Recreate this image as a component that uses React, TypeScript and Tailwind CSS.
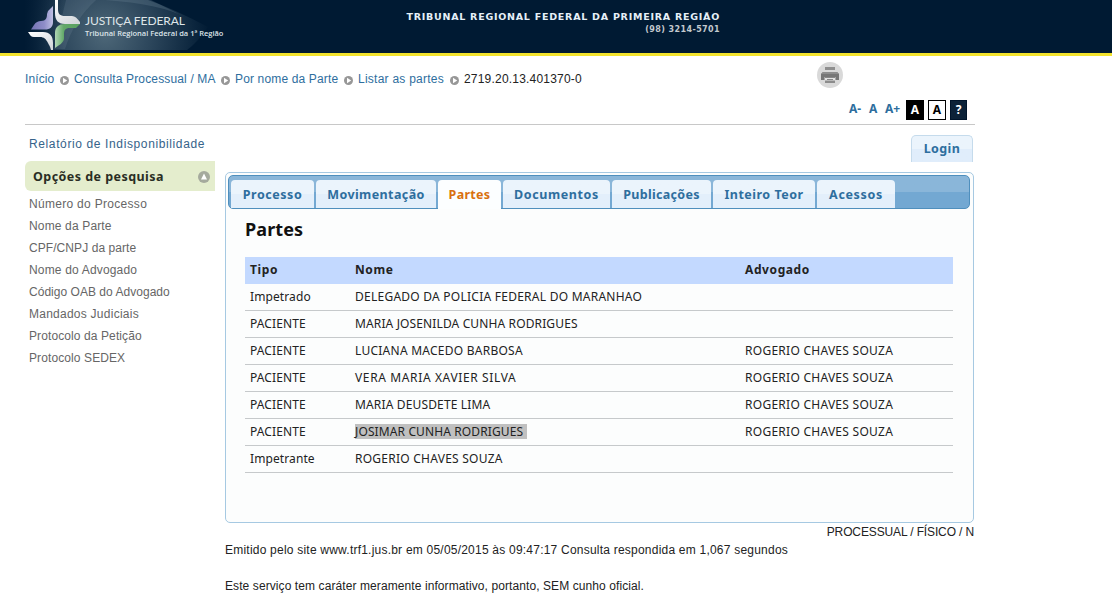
import { clsx } from 'clsx';

const crumbs = [
  { label: 'Início', width: 'w-[35px]', tracking: 'tracking-[0.1px]' },
  { label: 'Consulta Processual / MA', width: 'w-[147px]', tracking: 'tracking-[0.15px]' },
  { label: 'Por nome da Parte', width: 'w-[109px]', tracking: 'tracking-[0.15px]' },
  { label: 'Listar as partes', width: 'w-[92px]', tracking: 'tracking-[0.25px]' },
];

const searchOptions = [
  { label: 'Número do Processo', tracking: 'tracking-[0.3px]' },
  { label: 'Nome da Parte', tracking: 'tracking-[0.15px]' },
  { label: 'CPF/CNPJ da parte', tracking: 'tracking-[0.07px]' },
  { label: 'Nome do Advogado', tracking: 'tracking-[0.17px]' },
  { label: 'Código OAB do Advogado', tracking: 'tracking-[0.03px]' },
  { label: 'Mandados Judiciais', tracking: 'tracking-[0.25px]' },
  { label: 'Protocolo da Petição', tracking: 'tracking-[0.1px]' },
  { label: 'Protocolo SEDEX', tracking: 'tracking-[0.1px]' },
];

const tabs = [
  { label: 'Processo', width: 'w-[83px]', tracking: 'tracking-[0.55px]' },
  { label: 'Movimentação', width: 'w-[120px]', tracking: 'tracking-[0.4px]' },
  { label: 'Partes', width: 'w-[63px]', tracking: 'tracking-[0.3px]', active: true },
  { label: 'Documentos', width: 'w-[107px]', tracking: 'tracking-[0.6px]' },
  { label: 'Publicações', width: 'w-[99px]', tracking: 'tracking-[0.3px]' },
  { label: 'Inteiro Teor', width: 'w-[102px]', tracking: 'tracking-[0.5px]' },
  { label: 'Acessos', width: 'w-[78px]', tracking: 'tracking-[0.65px]' },
];

const rows = [
  { tipo: 'Impetrado', nome: 'DELEGADO DA POLICIA FEDERAL DO MARANHAO', advogado: '', tracking: 'tracking-[0.25px]' },
  { tipo: 'PACIENTE', nome: 'MARIA JOSENILDA CUNHA RODRIGUES', advogado: '', tracking: 'tracking-[0.13px]' },
  { tipo: 'PACIENTE', nome: 'LUCIANA MACEDO BARBOSA', advogado: 'ROGERIO CHAVES SOUZA', tracking: 'tracking-[0.25px]' },
  { tipo: 'PACIENTE', nome: 'VERA MARIA XAVIER SILVA', advogado: 'ROGERIO CHAVES SOUZA', tracking: 'tracking-[0.63px]' },
  { tipo: 'PACIENTE', nome: 'MARIA DEUSDETE LIMA', advogado: 'ROGERIO CHAVES SOUZA', tracking: 'tracking-[0.15px]' },
  {
    tipo: 'PACIENTE',
    nome: 'JOSIMAR CUNHA RODRIGUES',
    advogado: 'ROGERIO CHAVES SOUZA',
    tracking: 'tracking-[0.12px]',
    selected: true,
  },
  { tipo: 'Impetrante', nome: 'ROGERIO CHAVES SOUZA', advogado: '', tracking: 'tracking-[0.25px]' },
];

function Logo() {
  return (
    <svg width="300" height="53" viewBox="0 0 300 53" className="absolute left-0 top-0">
      <defs>
        <radialGradient id="glow" gradientUnits="userSpaceOnUse" cx="105" cy="34" r="105">
          <stop offset="0" stopColor="#567080" />
          <stop offset="0.45" stopColor="#304a5f" />
          <stop offset="1" stopColor="#001a33" />
        </radialGradient>
        <linearGradient id="shade">
          <stop offset="0" stopColor="#001a33" />
          <stop offset="1" stopColor="#001a33" stopOpacity="0" />
        </linearGradient>
        <linearGradient id="violet" x2="1" y2="0">
          <stop offset="0" stopColor="#7473b4" />
          <stop offset="0.6" stopColor="#8e8dc8" />
          <stop offset="1" stopColor="#c0c0e4" />
        </linearGradient>
        <linearGradient id="green" x2="1" y2="0">
          <stop offset="0" stopColor="#b0d6b5" />
          <stop offset="0.35" stopColor="#62a868" />
          <stop offset="1" stopColor="#5a9f61" />
        </linearGradient>
        <linearGradient id="silver" x2="0.7" y2="1">
          <stop offset="0" stopColor="#ffffff" />
          <stop offset="1" stopColor="#d5d8dd" />
        </linearGradient>
      </defs>
      <path d="M24 0H148Q174 9 208 27Q198 42 187 50H24Z" fill="url(#glow)" opacity="0.9" />
      <rect x="24" width="40" height="50" fill="url(#shade)" />
      <path d="M66 0H96Q74 20 65 49H54Z" fill="#a9bfca" opacity="0.12" />
      <path d="M105 0H151L185 17Q160 4 105 0Z" fill="#7790a1" opacity="0.25" />
      <path d="M55 0H58V9C58 14 60 16 65 16H72C75 16 77 18 80 22V24H65C58 24 55 20 55 13Z" fill="url(#silver)" />
      <path d="M53 6V22C53 27 50 29.5 45 29.5H31L34 25C36 22 38 21 41 21C46 21 47 18 47 14L48 11Z" fill="url(#violet)" />
      <path d="M80 24L76 28H70C65 28 64 30 64 35V38C64 42 61 44 55 48V33C55 27 59 24 65 24Z" fill="url(#green)" />
      <path d="M28 32H43C50 32 53 36 53 43V50H51C50 46 49 45 48 43C46 39 44 37 40 37H34C31 37 30 35 28 32Z" fill="url(#silver)" />
    </svg>
  );
}

function CrumbArrow() {
  return (
    <svg width="9" height="9" viewBox="0 0 9 9" className="mt-[3px] shrink-0">
      <circle cx="4.5" cy="4.5" r="4.5" fill="#979797" />
      <path d="M3 1.8L7.2 4.5L3 7.2Z" fill="#fff" />
    </svg>
  );
}

function PrinterIcon() {
  return (
    <svg width="26" height="26" viewBox="0 0 26 26">
      <circle cx="13" cy="13" r="13" fill="#d9d9d9" />
      <rect x="8" y="5" width="10" height="3" fill="#8e8e8e" />
      <path d="M6 10H20L22 12V18H18.5V15H7.5V18H4V12Z" fill="#777" />
      <path d="M6 10H20L22 12H4Z" fill="#8e8e8e" />
      <path d="M8 15H18V21H8Z" fill="#e4e4e4" />
      <path d="M8 15.5H18M10 17.5H16" stroke="#888" />
      <path d="M8 18.5H18V21H8Z" fill="#8c8c8c" />
    </svg>
  );
}

function Header() {
  return (
    <header className="relative h-14 border-b-[3px] border-[#f3e32d] bg-[#001a33]">
      <Logo />
      <div className="absolute left-[85px] top-[13px] whitespace-nowrap font-[Lato,sans-serif] text-[12px] leading-4 tracking-[-0.1px] text-[#dfe5e9]">
        JUSTIÇA FEDERAL
      </div>
      <div className="absolute left-[85px] top-[27px] whitespace-nowrap font-['Open_Sans',sans-serif] text-[7.5px] font-semibold leading-3 text-[#dce3e8]">
        Tribunal Regional Federal da 1ª Região
      </div>
      <div className="flex w-[720px] flex-col items-end whitespace-nowrap pt-[9px] font-['DejaVu_Sans',sans-serif] font-bold">
        <div className="text-[9.5px] leading-[15px] tracking-[0.75px] text-[#e6f0f8]">
          TRIBUNAL REGIONAL FEDERAL DA PRIMEIRA REGIÃO
        </div>
        <div className="text-[8px] leading-[11px] tracking-[0.4px] text-[#c3c9ce]">(98) 3214-5701</div>
      </div>
    </header>
  );
}

function Accessibility() {
  const box = 'flex h-5 items-center justify-center border font-bold';
  return (
    <div className="flex h-[24px] w-[942px] items-start justify-end whitespace-nowrap font-['Noto_Sans',sans-serif] text-[12px] font-bold text-[#2e6e9e]">
      <span className="w-5 leading-[18px]">A-</span>
      <span className="w-4 leading-[18px]">A</span>
      <span className="w-[21px] leading-[18px]">A+</span>
      <span className={clsx(box, 'w-[18px] border-black bg-black text-white')}>A</span>
      <span className={clsx(box, 'ml-1 w-[18px] border-black bg-white text-black')}>A</span>
      <span className={clsx(box, 'ml-1 w-[17px] border-[#00142a] bg-[#0c2238] text-white')}>?</span>
    </div>
  );
}

function Sidebar() {
  return (
    <aside className="w-[190px] shrink-0 whitespace-nowrap">
      <a className="block h-9 pl-1 pt-[10px] leading-[18px] tracking-[0.62px] text-[#36638a]">
        Relatório de Indisponibilidade
      </a>
      <div className="flex h-[30px] items-center justify-between rounded-l-md bg-[#e4edcd] pl-2 pr-[5px]">
        <span className="pt-[2px] font-['Noto_Sans',sans-serif] text-[12.5px] font-bold tracking-[0.45px] text-[#2a2d24]">
          Opções de pesquisa
        </span>
        <svg width="12" height="12" viewBox="0 0 12 12" className="mt-[2px]">
          <circle cx="6" cy="6" r="6" fill="#a5aa9d" />
          <path d="M6 2.5L9 8.5H3Z" fill="#fff" />
        </svg>
      </div>
      <ul className="pl-1 pt-[3px] text-[#666]">
        {searchOptions.map((o) => (
          <li key={o.label} className={clsx('h-[22px] leading-[21px]', o.tracking)}>
            {o.label}
          </li>
        ))}
      </ul>
    </aside>
  );
}

function Tabs() {
  return (
    <nav className="flex h-[34px] items-start gap-[2px] rounded-[5px] border border-[#4f8fbd] bg-linear-to-b from-[#8ab6d9] from-50% to-[#73a8d2] to-50% pl-[2px] pt-1">
      {tabs.map((t) => (
        <a
          key={t.label}
          className={clsx(
            'flex shrink-0 items-center justify-center rounded-t-[4px] pt-[2px] text-[12.5px] font-bold',
            t.width,
            t.tracking,
            t.active
              ? 'h-[29px] bg-[#fcfeff] text-[#d9700f]'
              : 'h-7 bg-linear-to-b from-[#ebf4fc] from-50% to-[#e3effb] to-50% text-[#2e6e9e]'
          )}
        >
          {t.label}
        </a>
      ))}
    </nav>
  );
}

function PartiesTable() {
  return (
    <table className="ml-[17px] w-[708px] table-fixed border-separate border-spacing-0 text-left tracking-[0.27px] text-[#222]">
      <thead>
        <tr className="h-[27px] bg-[#c3d9ff] font-['Noto_Sans',sans-serif] text-[12px] tracking-[0.6px]">
          <th className="w-[110px] pb-[2px] pl-[5px]">Tipo</th>
          <th className="w-[390px] pb-[2px]">Nome</th>
          <th className="pb-[2px]">Advogado</th>
        </tr>
      </thead>
      <tbody>
        {rows.map((r) => (
          <tr key={r.nome + r.tipo} className="h-[27px] *:border-b *:border-[#c6c9cb]">
            <td className="pl-[5px] tracking-[0.1px]">{r.tipo}</td>
            <td className={r.tracking}>
              <span className={clsx('inline-block leading-[15px]', r.selected && 'bg-[#c0c0c0] pr-1')}>{r.nome}</span>
            </td>
            <td>{r.advogado}</td>
          </tr>
        ))}
      </tbody>
    </table>
  );
}

export default function App() {
  return (
    <div className="h-[602px] w-[1112px] overflow-hidden bg-white font-['Liberation_Sans',sans-serif] text-[12px] text-[#222]">
      <Header />
      <div className="flex h-11 items-start pl-[25px] pt-[6px]">
        <div className="flex w-[792px] items-center whitespace-nowrap pt-[8px] leading-[18px]">
          {crumbs.map((c) => (
            <div key={c.label} className="flex items-center">
              <a className={clsx('text-[#2e6e9e]', c.width, c.tracking)}>{c.label}</a>
              <CrumbArrow />
              <span className="w-[5px]" />
            </div>
          ))}
          <span className="tracking-[0.2px]">2719.20.13.401370-0</span>
        </div>
        <PrinterIcon />
      </div>
      <div className="ml-[25px] w-[950px] border-b border-[#c8c8c8]">
        <Accessibility />
      </div>
      <div className="flex gap-[10px] pl-[25px]">
        <Sidebar />
        <main className="w-[749px]">
          <div className="flex h-[47px] justify-end pr-px pt-[10px]">
            <div className="flex h-[27px] w-[62px] items-center justify-center rounded-t-[5px] border border-b-0 border-[#c5dbec] bg-linear-to-b from-[#ebf4fc] from-50% to-[#e0edfb] to-50% font-['Noto_Sans',sans-serif] text-[12.5px] font-bold tracking-[0.4px] text-[#2e6e9e]">
              Login
            </div>
          </div>
          <section className="h-[351px] rounded-[5px] border border-[#a6c9e2] bg-[#fcfdfd] p-[2px] pr-[3px] font-['Noto_Sans',sans-serif]">
            <Tabs />
            <h2 className="mb-[15px] ml-[17px] mt-[7px] text-[18px] font-bold leading-[26px] tracking-[0.1px] text-[#111]">
              Partes
            </h2>
            <PartiesTable />
          </section>
          <div className="pt-px text-right leading-[16px] tracking-[-0.13px]">PROCESSUAL / FÍSICO / N</div>
          <p className="pt-px leading-[18px] tracking-[0.22px]">
            Emitido pelo site www.trf1.jus.br em 05/05/2015 às 09:47:17 Consulta respondida em 1,067 segundos
          </p>
          <p className="pt-[18px] leading-[18px] tracking-[0.09px]">
            Este serviço tem caráter meramente informativo, portanto, SEM cunho oficial.
          </p>
        </main>
      </div>
    </div>
  );
}
